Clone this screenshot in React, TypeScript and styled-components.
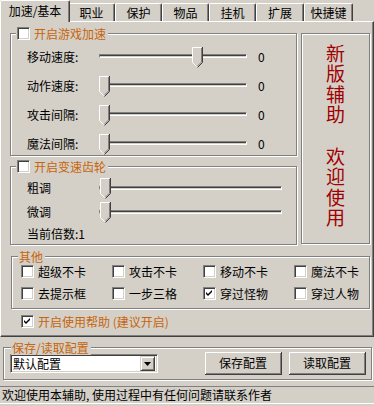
import styled, { createGlobalStyle } from "styled-components";

const FACE = "#D4D0C8";
const SHADOW = "#808080";
const DARK = "#404040";
const ORANGE = "#C8640A";

const GlobalStyle = createGlobalStyle`
  html, body {
    margin: 0;
    padding: 0;
    background: ${FACE};
  }
  body {
    font-family: "Noto Sans CJK SC", "Liberation Sans", sans-serif;
    font-size: 12px;
    color: #000;
  }
`;

const Window = styled.div`
  width: 374px;
  height: 406px;
  background: ${FACE};
  display: flex;
  flex-direction: column;
  overflow: hidden;
`;

const TabBar = styled.div`
  height: 21px;
  display: flex;
  align-items: flex-end;
  padding-left: 2px;
  position: relative;
  z-index: 1;
`;

const Tab = styled.div<{ active?: boolean; w: number }>`
  box-sizing: border-box;
  width: ${(p) => p.w}px;
  height: ${(p) => (p.active ? 22 : 18)}px;
  margin: ${(p) => (p.active ? "0 -2px -1px -2px" : "0")};
  background: ${FACE};
  border-top: 1px solid #fff;
  border-left: 1px solid #fff;
  border-right: 1px solid ${DARK};
  border-top-left-radius: 2px;
  border-top-right-radius: 2px;
  box-shadow: inset -1px 0 0 ${SHADOW};
  display: flex;
  align-items: center;
  justify-content: center;
  line-height: 1;
  padding-bottom: ${(p) => (p.active ? 2 : 0)}px;
  position: relative;
  z-index: ${(p) => (p.active ? 2 : 0)};
`;

const TabPage = styled.div`
  box-sizing: border-box;
  height: 316px;
  border-top: 1px solid #fff;
  border-left: 1px solid #fff;
  border-right: 1px solid ${DARK};
  border-bottom: 1px solid ${DARK};
  box-shadow: inset -1px -1px 0 ${SHADOW};
  padding: 11px 3px 0 9px;
  display: flex;
  flex-direction: column;
`;

const TopArea = styled.div`
  display: flex;
  gap: 4px;
`;

const LeftColumn = styled.div`
  width: 288px;
  display: flex;
  flex-direction: column;
  gap: 10px;
`;

const GroupBox = styled.div<{ h: number }>`
  position: relative;
  box-sizing: border-box;
  height: ${(p) => p.h}px;
  border: 1px solid ${SHADOW};
  box-shadow: inset 1px 1px 0 #fff, 1px 1px 0 #fff;
`;

const GroupTitle = styled.div<{ left?: number }>`
  position: absolute;
  top: -8px;
  left: ${(p) => p.left ?? 5}px;
  background: ${FACE};
  padding: 0 2px 0 1px;
  display: flex;
  align-items: center;
  gap: 4px;
  color: ${ORANGE};
  line-height: 15px;
`;

const SliderRows = styled.div<{ pt: number }>`
  padding: ${(p) => p.pt}px 0 0 16px;
  display: flex;
  flex-direction: column;
`;

const SliderRow = styled.div<{ h: number }>`
  height: ${(p) => p.h}px;
  display: flex;
  align-items: center;
`;

const Label = styled.span`
  width: 72px;
  line-height: 1;
`;

const Slider = styled.div<{ w: number }>`
  position: relative;
  width: ${(p) => p.w}px;
  height: 20px;
  display: flex;
  align-items: center;
`;

const Track = styled.div`
  box-sizing: border-box;
  width: 100%;
  height: 4px;
  border-top: 1px solid ${SHADOW};
  border-left: 1px solid ${SHADOW};
  border-bottom: 1px solid #fff;
  border-right: 1px solid #fff;
  box-shadow: inset 0 1px 0 ${DARK};
  margin-top: -1px;
`;

const Thumb = styled.svg`
  position: absolute;
  top: 0;
`;

const Value = styled.span`
  margin-left: 11px;
  line-height: 1;
`;

const Info = styled.div`
  height: 20px;
  display: flex;
  align-items: center;
  line-height: 1;
`;

const Banner = styled.div`
  box-sizing: border-box;
  width: 69px;
  height: 211px;
  border: 1px solid ${SHADOW};
  box-shadow: inset 1px 1px 0 #fff, 1px 1px 0 #fff;
  display: flex;
  flex-direction: column;
  align-items: center;
  gap: 21px;
  padding-top: 10px;
  color: #a00000;
  font-size: 19px;
`;

const BannerWord = styled.span`
  writing-mode: vertical-rl;
  text-orientation: upright;
  letter-spacing: 1.5px;
  line-height: 1;
`;

const OtherGroup = styled(GroupBox)`
  margin-top: 11px;
  margin-left: 1px;
  width: 359px;
`;

const CheckGrid = styled.div`
  display: grid;
  grid-template-columns: repeat(4, 91px);
  row-gap: 9px;
  padding: 8px 0 0 9px;
`;

const CheckItem = styled.label`
  display: flex;
  align-items: center;
  gap: 4px;
  line-height: 1;
  height: 13px;
`;

const Box = styled.span`
  box-sizing: border-box;
  width: 13px;
  height: 13px;
  flex: none;
  background: #fff;
  border-top: 1px solid ${SHADOW};
  border-left: 1px solid ${SHADOW};
  border-bottom: 1px solid #fff;
  border-right: 1px solid #fff;
  box-shadow: inset 1px 1px 0 ${DARK}, inset -1px -1px 0 ${FACE};
  display: flex;
  align-items: center;
  justify-content: center;
`;

const HelpRow = styled(CheckItem)`
  margin: 6px 0 0 11px;
  color: ${ORANGE};
`;

const SaveGroup = styled(GroupBox)`
  margin: 10px 2px 0 3px;
  display: flex;
  align-items: center;
  padding: 0 5px 0 6px;
`;

const Select = styled.div`
  box-sizing: border-box;
  width: 148px;
  height: 19px;
  background: #fff;
  border-top: 1px solid ${SHADOW};
  border-left: 1px solid ${SHADOW};
  border-bottom: 1px solid #fff;
  border-right: 1px solid #fff;
  box-shadow: inset 1px 1px 0 ${DARK}, inset -1px -1px 0 ${FACE};
  display: flex;
  align-items: center;
  padding: 0 2px 0 2px;
`;

const SelectText = styled.span`
  flex: 1;
  line-height: 1;
`;

const ArrowButton = styled.span`
  box-sizing: border-box;
  width: 15px;
  height: 15px;
  background: ${FACE};
  border-top: 1px solid ${FACE};
  border-left: 1px solid ${FACE};
  border-right: 1px solid ${DARK};
  border-bottom: 1px solid ${DARK};
  box-shadow: inset 1px 1px 0 #fff, inset -1px -1px 0 ${SHADOW};
  display: flex;
  align-items: center;
  justify-content: center;
`;

const Buttons = styled.div`
  margin-left: auto;
  display: flex;
  gap: 7px;
`;

const Button = styled.button`
  box-sizing: border-box;
  width: 77px;
  height: 23px;
  background: ${FACE};
  border: none;
  border-right: 1px solid ${DARK};
  border-bottom: 1px solid ${DARK};
  box-shadow: inset 1px 1px 0 #fff, inset -1px -1px 0 ${SHADOW};
  font: inherit;
  color: #000;
  padding: 0;
  line-height: 1;
`;

const StatusBar = styled.div`
  box-sizing: border-box;
  height: 18px;
  margin-top: 6px;
  border-top: 1px solid ${SHADOW};
  border-bottom: 1px solid #fff;
  display: flex;
  align-items: center;
  padding-left: 2px;
  line-height: 1;
`;

function Check({ checked }: { checked?: boolean }) {
  return (
    <Box>
      {checked && (
        <svg width="7" height="7" viewBox="0 0 7 7">
          <path d="M0 2 L2 4 L6 0 L6 2 L2 6 L0 4 Z" fill="#000" />
        </svg>
      )}
    </Box>
  );
}

function TrackBar({ width, pos }: { width: number; pos: number }) {
  return (
    <Slider w={width}>
      <Track />
      <Thumb width="11" height="21" viewBox="0 0 11 21" style={{ left: pos }}>
        <path d="M0.5 15.5 V0.5 H10.5 V15.5 L5.5 20.5 Z" fill={FACE} />
        <path d="M0.5 15.5 V0.5 H9.5" stroke="#fff" fill="none" />
        <path d="M10.5 0 V15.5 L5.5 20.5" stroke={DARK} fill="none" />
        <path d="M9.5 1 V15 L5.5 19" stroke={SHADOW} fill="none" />
        <path d="M0.5 15.5 L4.5 19.5" stroke="#fff" fill="none" />
      </Thumb>
    </Slider>
  );
}

const tabs = [
  { name: "加速/基本", w: 70 },
  { name: "职业", w: 47 },
  { name: "保护", w: 47 },
  { name: "物品", w: 47 },
  { name: "挂机", w: 47 },
  { name: "扩展", w: 48 },
  { name: "快捷键", w: 49 },
];

const speedRows = [
  { label: "移动速度:", pos: 93 },
  { label: "动作速度:", pos: 0 },
  { label: "攻击间隔:", pos: 0 },
  { label: "魔法间隔:", pos: 0 },
];

const others = [
  { label: "超级不卡" },
  { label: "攻击不卡" },
  { label: "移动不卡" },
  { label: "魔法不卡" },
  { label: "去提示框" },
  { label: "一步三格" },
  { label: "穿过怪物", checked: true },
  { label: "穿过人物" },
];

export default function App() {
  return (
    <Window>
      <GlobalStyle />
      <TabBar>
        {tabs.map((t, i) => (
          <Tab key={t.name} w={t.w} active={i === 0}>
            {t.name}
          </Tab>
        ))}
      </TabBar>
      <TabPage>
        <TopArea>
          <LeftColumn>
            <GroupBox h={123}>
              <GroupTitle>
                <Check />
                <span>开启游戏加速</span>
              </GroupTitle>
              <SliderRows pt={8}>
                {speedRows.map((r) => (
                  <SliderRow key={r.label} h={29}>
                    <Label>{r.label}</Label>
                    <TrackBar width={148} pos={r.pos} />
                    <Value>0</Value>
                  </SliderRow>
                ))}
              </SliderRows>
            </GroupBox>
            <GroupBox h={79}>
              <GroupTitle>
                <Check />
                <span>开启变速齿轮</span>
              </GroupTitle>
              <SliderRows pt={9}>
                <SliderRow h={24}>
                  <Label>粗调</Label>
                  <TrackBar width={183} pos={1} />
                </SliderRow>
                <SliderRow h={24}>
                  <Label>微调</Label>
                  <TrackBar width={183} pos={1} />
                </SliderRow>
                <Info>当前倍数:1</Info>
              </SliderRows>
            </GroupBox>
          </LeftColumn>
          <Banner>
            <BannerWord>新版辅助</BannerWord>
            <BannerWord>欢迎使用</BannerWord>
          </Banner>
        </TopArea>
        <OtherGroup h={53}>
          <GroupTitle left={6}>
            <span>其他</span>
          </GroupTitle>
          <CheckGrid>
            {others.map((o) => (
              <CheckItem key={o.label}>
                <Check checked={o.checked} />
                <span>{o.label}</span>
              </CheckItem>
            ))}
          </CheckGrid>
        </OtherGroup>
        <HelpRow>
          <Check checked />
          <span>开启使用帮助 (建议开启)</span>
        </HelpRow>
      </TabPage>
      <SaveGroup h={33}>
        <GroupTitle left={7}>
          <span>保存/读取配置</span>
        </GroupTitle>
        <Select>
          <SelectText>默认配置</SelectText>
          <ArrowButton>
            <svg width="7" height="4" viewBox="0 0 7 4">
              <path d="M0 0 H7 L3.5 4 Z" fill="#000" />
            </svg>
          </ArrowButton>
        </Select>
        <Buttons>
          <Button>保存配置</Button>
          <Button>读取配置</Button>
        </Buttons>
      </SaveGroup>
      <StatusBar>欢迎使用本辅助, 使用过程中有任何问题请联系作者</StatusBar>
    </Window>
  );
}
